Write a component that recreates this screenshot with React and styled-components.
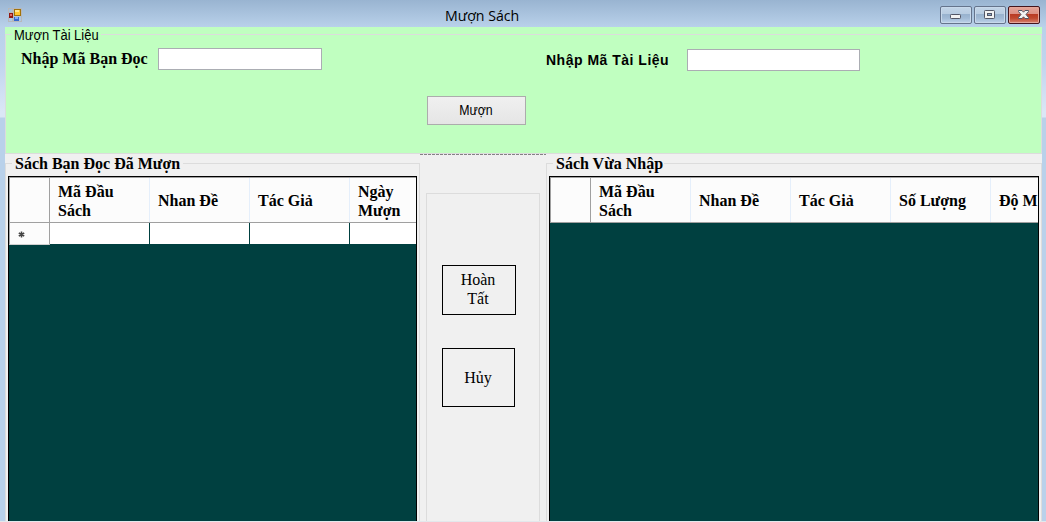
import React from "react";
import styled, { createGlobalStyle } from "styled-components";

const Global = createGlobalStyle`
  * { box-sizing: border-box; }
  body { margin: 0; overflow: hidden; }
`;
const sans = `"Liberation Sans", Arial, sans-serif`;
const serif = `"Liberation Serif", "Times New Roman", serif`;

const Window = styled.div`
  width: 1046px;
  height: 522px;
  display: flex;
  flex-direction: column;
  overflow: hidden;
  background: #b9d1ea;
  border-bottom: 1px solid #e3e8ec;
  color: #000;
`;
const TitleBar = styled.header`
  height: 27px;
  flex: none;
  display: grid;
  grid-template-columns: 445px 1fr auto;
  align-items: start;
  padding: 0 6px 0 0;
  background: linear-gradient(#99b4d1, #b9d1ea);
`;
const AppIcon = styled.svg`
  display: block;
  margin: 8px 0 0 8px;
`;
const Title = styled.h1`
  margin: 5px 0 0;
  font: 400 15px/20px "Open Sans", "Noto Sans", sans-serif;
  white-space: nowrap;
`;
const Condensed = styled.span`
  display: inline-block;
  transform-origin: ${(p) => p.$origin || "0 50%"};
  transform: scaleX(${(p) => p.$scale});
`;
const Controls = styled.div`
  display: flex;
  gap: 2px;
  margin-top: 6px;
`;
const Control = styled.button`
  width: 32px;
  height: 18px;
  padding: 0;
  display: block;
  border: 1px solid ${(p) => (p.$close ? "#43141c" : "#65748c")};
  border-radius: 2px;
  box-shadow: inset 0 0 0 1px ${(p) => (p.$close ? "#e5a699" : "#c8d9eb")};
  background: ${(p) =>
    p.$close
      ? "linear-gradient(#e4a59a 0, #dc8f82 44%, #b83a23 45%, #c0492f 70%, #d68570 100%)"
      : "linear-gradient(#c3d5e8 0, #b8cce1 44%, #98b2ce 45%, #a2bad5 70%, #bdd3ea 100%)"};
  svg { display: block; }
`;
const Body = styled.main`
  flex: 1;
  min-height: 0;
  display: flex;
  padding: 0 4px 0 5px;
  background: linear-gradient(#b9d1ea 0, #c0d4ee 35px, #dbe7f6 85px, #dbe7f6 90px, #b9d1ea 91px);
`;
const Client = styled.div`
  flex: 1;
  min-width: 0;
  display: flex;
  flex-direction: column;
  background: #f0f0f0;
`;
const LoanForm = styled.section`
  height: 127px;
  flex: none;
  padding-top: 7px;
  background: #c0ffc0;
  border-bottom: 1px solid #dcdcdc;
`;
const GroupFrame = styled.div`
  height: 100%;
  border: 1px solid #dcdcdc;
  border-bottom: 0;
`;
const Legend = styled.div`
  width: ${(p) => p.$w}px;
  height: 17px;
  margin: -8px 0 0 6px;
  padding: 0 0 0 ${(p) => p.$indent}px;
  background: ${(p) => p.$bg};
  font: ${(p) => p.$font};
  white-space: nowrap;
`;
const Fields = styled.div`
  display: flex;
  align-items: flex-start;
  height: 52px;
  padding: 4px 0 0 15px;
`;
const Label = styled.label`
  width: ${(p) => p.$w}px;
  margin: ${(p) => p.$margin};
  font: ${(p) => p.$font};
  letter-spacing: ${(p) => p.$track || 0}px;
  white-space: nowrap;
`;
const Input = styled.input`
  width: ${(p) => p.$w}px;
  height: 22px;
  margin: ${(p) => p.$margin || 0};
  padding: 0 3px;
  border: 1px solid #abadb3;
  border-radius: 0;
  background: #fff;
  outline: 0;
`;
const BorrowButton = styled.button`
  display: block;
  width: 99px;
  height: 29px;
  margin-left: 421px;
  padding: 0 1px 1px 0;
  border: 1px solid #acacac;
  background: linear-gradient(#f0f0f0, #e5e5e5);
  font: 14px/20px ${sans};
  color: #000;
`;
const Lower = styled.div`
  flex: 1;
  min-height: 0;
  display: grid;
  grid-template-columns: 415px 126px 496px;
`;
const Panel = styled.section`
  min-width: 0;
  padding-top: 9px;
`;
const Grid = styled.div`
  width: ${(p) => p.$w}px;
  height: 345px;
  margin: 3px 0 0 2px;
  border: 1px solid #000;
  border-bottom: 0;
  background: #004040;
  overflow: hidden;
`;
const HeaderRow = styled.div`
  display: flex;
  width: 700px;
  height: 46px;
  background: #fcfcfc;
  border: 1px solid #a0a0a0;
`;
const HeaderCell = styled.div`
  width: ${(p) => (p.$corner ? 40 : 100)}px;
  height: 44px;
  flex: none;
  display: flex;
  align-items: center;
  padding: 1px 8px 0;
  border-right: 1px solid ${(p) => (p.$corner ? "#a0a0a0" : "#e5effb")};
  font: 700 16px/19px ${serif};
  white-space: pre;
`;
const NewRow = styled.div`
  display: flex;
  width: 700px;
  height: 22px;
`;
const RowHead = styled.div`
  width: 41px;
  height: 22px;
  padding: 5px 0 0 8px;
  background: #fcfcfc;
  border-left: 1px solid #a0a0a0;
  border-right: 1px solid #a0a0a0;
  border-bottom: 1px solid #d0d0d0;
`;
const NewMark = styled.svg`
  display: block;
`;
const Cell = styled.div`
  width: 100px;
  height: 21px;
  background: #fff;
  border-right: 1px solid #004040;
`;
const Middle = styled.aside`
  display: flex;
  flex-direction: column;
`;
const DashedEdge = styled.div`
  height: 1px;
  flex: none;
  background: repeating-linear-gradient(90deg, #858085 0 3px, #f0f0f0 3px 4px);
`;
const Actions = styled.div`
  flex: 1;
  margin: 38px 6px 0;
  padding: 71px 0 0 15px;
  border: 1px solid #dcdcdc;
  border-bottom: 0;
`;
const ActionButton = styled.button`
  display: block;
  width: ${(p) => p.$w}px;
  height: ${(p) => p.$h}px;
  margin-bottom: 33px;
  padding: ${(p) => p.$pad};
  border: 1px solid #000;
  background: #f0f0f0;
  font: 16px/19px ${serif};
  color: #000;
  white-space: pre;
`;

const groupFont = `700 16px/16px ${serif}`;

function Columns({ names }) {
  return (
    <HeaderRow>
      <HeaderCell $corner />
      {names.map((n) => <HeaderCell key={n}>{n}</HeaderCell>)}
    </HeaderRow>
  );
}

export default function App() {
  return (
    <Window>
      <Global />
      <TitleBar>
        <AppIcon width="14" height="14" viewBox="0 0 14 14" shapeRendering="crispEdges">
          <path d="M.5 .5h4v4h-4zM.5 9.500h4v4h-4zM5.500 .5h8v13h-8z" fill="none" stroke="#b7b8bb" />
          <path d="M1 5h4v5H1z" fill="#8f1712" />
          <path d="M2 6h2v2H2z" fill="#e56b62" />
          <path d="M6 1h7v7H6z" fill="#a27209" />
          <path d="M7 2h5v5H7z" fill="#ffc72f" />
          <path d="M7 2h4v2H7z" fill="#ffe593" />
          <path d="M6 9h5v4H6z" fill="#3568ce" />
          <path d="M7 9h3v2H7z" fill="#82acf5" />
        </AppIcon>
        <Title><Condensed $scale={0.945}>Mượn Sách</Condensed></Title>
        <Controls>
          <Control aria-label="Minimize">
            <svg width="30" height="16" viewBox="0 0 30 16">
              <rect x="9.500" y="7.500" width="10" height="4" rx=".8" fill="#f3f3f3" stroke="#535666" />
            </svg>
          </Control>
          <Control aria-label="Maximize">
            <svg width="30" height="16" viewBox="0 0 30 16">
              <rect x="9.500" y="3.500" width="10" height="8" rx=".8" fill="#f3f3f3" stroke="#535666" />
              <rect x="12.500" y="6.500" width="4" height="2" fill="#8ba8c9" stroke="#535666" />
            </svg>
          </Control>
          <Control $close aria-label="Close">
            <svg width="30" height="16" viewBox="0 0 30 16">
              <path d="M9.500 3.500h3.500l1.500 1.700 1.500-1.700h3.500v1l-2.500 3 2.500 3v1H16l-1.500-1.700-1.500 1.700H9.500v-1l2.500-3-2.500-3z" fill="#f3f3f3" stroke="#535666" />
            </svg>
          </Control>
        </Controls>
      </TitleBar>
      <Body>
        <Client>
          <LoanForm>
            <GroupFrame>
              <Legend $w={89} $indent={2} $bg="#c0ffc0" $font={`14px/16px ${sans}`}>
                <Condensed $scale={0.925}>Mượn Tài Liệu</Condensed>
              </Legend>
              <Fields>
                <Label $w={137} $margin="3px 0 0" $font={groupFont}>Nhập Mã Bạn Đọc</Label>
                <Input $w={164} />
                <Label $w={141} $margin="3px 0 0 224px" $font={`700 14px/18px ${sans}`} $track={0.5}>
                  Nhập Mã Tài Liệu
                </Label>
                <Input $w={173} $margin="1px 0 0" />
              </Fields>
              <BorrowButton><Condensed $scale={0.88} $origin="50% 50%">Mượn</Condensed></BorrowButton>
            </GroupFrame>
          </LoanForm>
          <Lower>
            <Panel>
              <GroupFrame>
                <Legend $w={171} $indent={3} $bg="#f0f0f0" $font={groupFont}>Sách Bạn Đọc Đã Mượn</Legend>
                <Grid $w={409}>
                  <Columns names={["Mã Đầu\nSách", "Nhan Đề", "Tác Giả", "Ngày\nMượn"]} />
                  <NewRow>
                    <RowHead>
                      <NewMark width="7" height="12" viewBox="0 0 7 12">
                        <path d="M3.500 3.500v6M.8 5l5.400 3M.8 8l5.400-3" stroke="#444" strokeWidth="1.500" />
                      </NewMark>
                    </RowHead>
                    <Cell /><Cell /><Cell /><Cell />
                  </NewRow>
                </Grid>
              </GroupFrame>
            </Panel>
            <Middle>
              <DashedEdge />
              <Actions>
                <ActionButton $w={74} $h={50} $pad="0 2px 2px 0">{"Hoàn\nTất"}</ActionButton>
                <ActionButton $w={73} $h={59} $pad="0 1px 1px 0">Hủy</ActionButton>
              </Actions>
            </Middle>
            <Panel>
              <GroupFrame>
                <Legend $w={111} $indent={3} $bg="#f0f0f0" $font={groupFont}>Sách Vừa Nhập</Legend>
                <Grid $w={490}>
                  <Columns names={["Mã Đầu\nSách", "Nhan Đề", "Tác Giả", "Số Lượng", "Độ M"]} />
                </Grid>
              </GroupFrame>
            </Panel>
          </Lower>
        </Client>
      </Body>
    </Window>
  );
}
